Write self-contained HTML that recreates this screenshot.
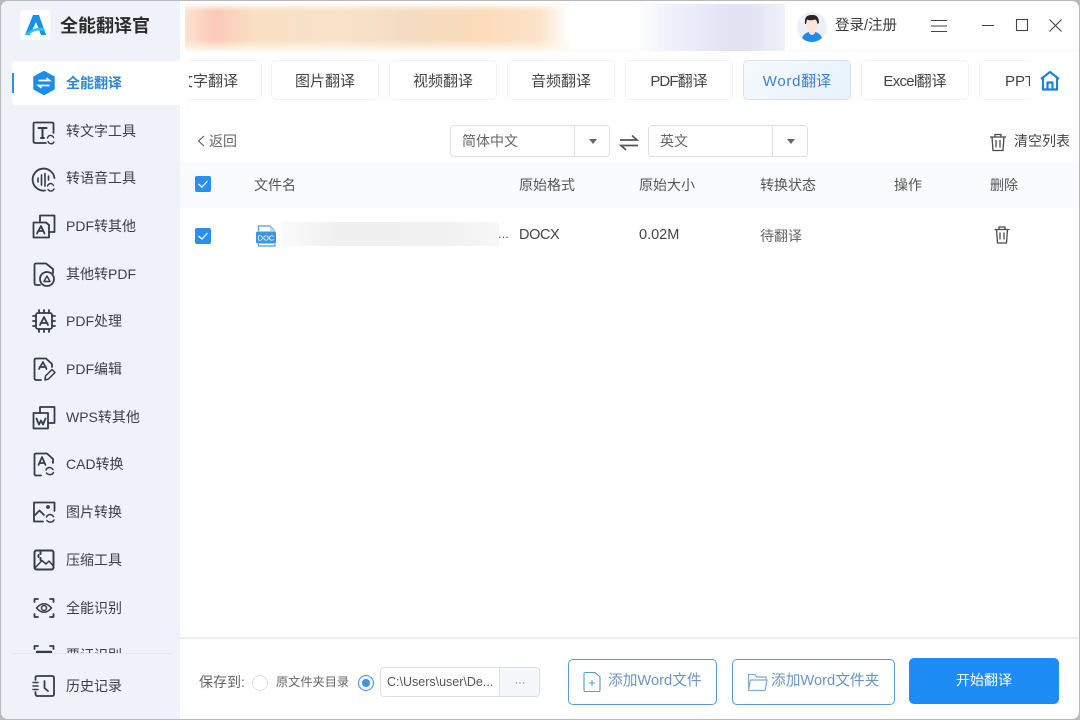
<!DOCTYPE html>
<html lang="zh"><head><meta charset="utf-8"><title>全能翻译官</title>
<style>
*{box-sizing:border-box;margin:0;padding:0}
html,body{width:1080px;height:720px;overflow:hidden;background:#b9b9b9}
body{font-family:"Liberation Sans","Noto Sans CJK SC",sans-serif;color:#333;font-size:14px}
.abs,.t,.tab,.ic{position:absolute}
.t{white-space:nowrap;line-height:20px}
#win{position:absolute;left:1px;top:1px;width:1078px;height:718px;background:#fff;border-radius:7px;overflow:hidden}
#page{position:absolute;left:-1px;top:-1px;width:1080px;height:720px}
#side{position:absolute;left:0;top:0;width:180px;height:720px;background:#eff3f9}
.nav{position:absolute;left:66px;font-size:14px;color:#3a3f47;line-height:20px;white-space:nowrap}
.ic{left:31px;width:26px;height:26px;fill:none;stroke:#333c48;stroke-width:1.8;stroke-linecap:round;stroke-linejoin:round}
.tab{top:60px;width:108px;height:40px;background:#fff;border:1px solid #f0f2f5;border-radius:5px;text-align:center;line-height:41px;font-size:15px;color:#444;white-space:nowrap;overflow:hidden}
.sel{position:absolute;top:125px;height:32px;background:#fff;border:1px solid #dcdfe6;border-radius:4px}
.sel i{position:absolute;right:34px;top:0;bottom:0;width:1px;background:#dcdfe6}
.sel b{position:absolute;right:12px;top:13px;width:0;height:0;border-left:4.5px solid transparent;border-right:4.5px solid transparent;border-top:5px solid #666}
.sel span{position:absolute;left:11px;top:5px;font-size:14px;color:#666;line-height:20px}
.cb{position:absolute;left:195px;width:16px;height:16px;background:#2a8ff0;border-radius:2px}
.cb svg{position:absolute;left:0;top:0;width:16px;height:16px;fill:none;stroke:#fff;stroke-width:1.2}
.h{top:175px;font-size:14px;color:#555}
.btn{position:absolute;top:659px;height:46px;background:#fff;border:1px solid #5b9ccb;border-radius:5px;font-size:14.7px;color:#6a95c4;line-height:43px;white-space:nowrap}
</style></head><body>
<div id="win"><div id="page">

<div class="abs" style="left:180px;top:50px;width:900px;height:1px;background:#f6f7f8"></div>

<!-- blurred banner -->
<div class="abs" style="left:185px;top:4px;width:600px;height:47px;overflow:hidden">
<div class="abs" style="left:0;top:0;width:385px;height:47px;background:linear-gradient(90deg,#fbe3d2 0,#fdd2c0 5%,#fbc9b8 8%,#f9e0c4 18%,#f8e3c9 40%,#f4dcc2 58%,#fcdcba 78%,#fbe3ca 92%,#fff 100%)"></div>
<div class="abs" style="left:0;top:0;width:385px;height:7px;background:linear-gradient(#fffaf5,rgba(255,255,255,0))"></div>
<div class="abs" style="left:0;top:36px;width:385px;height:11px;background:linear-gradient(rgba(255,255,255,0),#fff8ee)"></div>
<div class="abs" style="left:450px;top:0;width:150px;height:47px;background:linear-gradient(90deg,#fff 0,#eff0fb 25%,#e3e3f5 60%,#e2e2f1 75%,#eef1fa 100%)"></div>
</div>

<!-- sidebar -->
<div id="side"></div>
<div class="abs" style="left:12px;top:61px;width:180px;height:44px;background:#fff;border-radius:4px 0 0 4px"></div>
<div class="abs" style="left:180px;top:56px;width:12px;height:50px;background:#fff"></div>
<div class="abs" style="left:12px;top:73px;width:2px;height:20px;background:#2a8ff0"></div>

<!-- logo -->
<div class="abs" style="left:20px;top:10px;width:30px;height:30px;background:#fff;border-radius:3px"></div>
<svg class="abs" style="left:20px;top:10px" width="30" height="30" viewBox="0 0 30 30"><path d="M5 25 L13 5 H19 L26 25 H21 L16 12 L10 25Z" fill="#1492ea"/><path d="M5 25 C10 19 17 17 24 18 L25 21 C18 20 12 21 9 25Z" fill="#32c4f2"/></svg>
<div class="t" style="left:60px;top:14px;font-size:18px;font-weight:700;color:#2b2b2b;line-height:24px">全能翻译官</div>

<!-- nav icons -->
<svg class="abs" style="left:31px;top:70px" width="26" height="26" viewBox="0 0 26 26"><path d="M13 1.5 L23 7 V19 L13 24.5 L3 19 V7Z" fill="#1b8cec" stroke="#1b8cec" stroke-width="1.5" stroke-linejoin="round"/><path d="M7.5 10.5 H18.5 L15.5 8 M18.5 15.5 H7.5 L10.5 18" fill="none" stroke="#fff" stroke-width="1.7"/></svg>
<div class="nav" style="top:73px;color:#2f86d8;font-weight:700;font-size:14px">全能翻译</div>

<svg class="ic" style="top:120px" viewBox="0 0 26 26"><path d="M15 23 H4 Q2.500 23 2.500 21 V4 Q2.500 2.500 4 2.500 H21 Q22.500 2.500 22.500 4 V13"/><path d="M7.500 8 H15.500 M11.500 8 V18 M10 18 H13" stroke-width="2"/><path d="M16.500 18 Q17.500 15 20 15.500 Q22 16 22.500 17.500 M23 22 Q21.500 24.500 19 23.500 Q17.500 23 17 21.500" stroke-width="1.400"/></svg>
<div class="nav" style="top:121px">转文字工具</div>

<svg class="ic" style="top:167px" viewBox="0 0 26 26"><path d="M14 23.500 A11 11 0 1 1 23.500 11"/><path d="M7 11 V15 M10.500 8 V18 M14 6.500 V19 M17.500 9 V13" stroke-width="1.600"/><path d="M16.500 19 Q17.500 16.500 20 16.500 Q22 17 22.500 18.500 M23 22 Q21.500 24.500 19 24 Q17.500 23.500 17 22.500" stroke-width="1.400"/></svg>
<div class="nav" style="top:168px">转语音工具</div>

<svg class="ic" style="top:213px" viewBox="0 0 26 26"><path d="M9 8 V2.500 H23.500 V19 H18"/><path d="M2.500 9.500 H15 L18 12 V24.500 H2.500Z"/><path d="M6 20.500 L10 13 L13.500 20.500 M7 18 H12.500" stroke-width="1.800"/></svg>
<div class="nav" style="top:216px">PDF转其他</div>

<svg class="ic" style="top:261px" viewBox="0 0 26 26"><path d="M9 24 H5 Q3.500 24 3.500 22 V4 Q3.500 2.500 5 2.500 H15 L22 8 V12"/><circle cx="16" cy="18" r="7"/><path d="M13 20.500 L16 15 L19 20.500Z" stroke-width="1.400"/></svg>
<div class="nav" style="top:264px">其他转PDF</div>

<svg class="ic" style="top:308px" viewBox="0 0 26 26"><rect x="5" y="5" width="16" height="16" rx="2"/><path d="M8 5 V2 M13 5 V2 M18 5 V2 M8 24 V21 M13 24 V21 M18 24 V21 M2 8 H5 M2 13 H5 M2 18 H5 M21 8 H24 M21 13 H24 M21 18 H24"/><path d="M9 17 L13 9 L17 17 M9.500 15 H16.500" stroke-width="1.800"/></svg>
<div class="nav" style="top:311px">PDF处理</div>

<svg class="ic" style="top:356px" viewBox="0 0 26 26"><path d="M10 24 H5 Q3.500 24 3.500 22 V4 Q3.500 2.500 5 2.500 H15 L21 8 V11"/><path d="M8 13 L12 6 L15.500 13 M8.500 11 H15" stroke-width="1.700"/><path d="M14 24 L14.500 20 L21 13.500 L24 16.500 L17.500 23Z" stroke-width="1.500"/></svg>
<div class="nav" style="top:359px">PDF编辑</div>

<svg class="ic" style="top:404px" viewBox="0 0 26 26"><path d="M9 8 V3 H23.500 V19 H18"/><path d="M2.500 9 H17 V24.500 H2.500Z"/><path d="M5.500 14.500 L8 20.500 L10 16.500 L12 20.500 L14.500 14.500" stroke-width="1.800"/></svg>
<div class="nav" style="top:407px">WPS转其他</div>

<svg class="ic" style="top:451px" viewBox="0 0 26 26"><path d="M10 24.500 H5 Q3.500 24.500 3.500 23 V4 Q3.500 2.500 5 2.500 H16 L22 8 V12"/><path d="M7.500 14 L11 6 L14.500 14 M8.500 12 H13.500" stroke-width="1.700"/><path d="M15 19 Q16 16.500 19 16.500 Q21 17 22 18.500 M22.500 21.500 Q21 24 18.500 23.500 Q16.500 23.500 15.500 22" stroke-width="1.500"/></svg>
<div class="nav" style="top:454px">CAD转换</div>

<svg class="ic" style="top:499px" viewBox="0 0 26 26"><path d="M12 22.500 H3 V3.500 H23.500 V12"/><path d="M3 17 L8.500 11.500 L13 16"/><circle cx="17" cy="8" r="1" fill="#333c48"/><path d="M15.500 18 Q16.500 15.500 19.500 15.500 Q21.500 16 22.500 17.500 M23 21 Q21.500 23.500 19 23 Q17 23 16 21.500" stroke-width="1.500"/></svg>
<div class="nav" style="top:502px">图片转换</div>

<svg class="ic" style="top:547px" viewBox="0 0 26 26"><rect x="3.500" y="3.500" width="19" height="19" rx="2" stroke-width="2"/><path d="M4 21 L11 13.500 L15 17 L18 14 L22 18.500" stroke-width="1.500"/><path d="M9.500 5 V7 M7.500 8 V10 M9.500 11 V13" stroke-width="2"/></svg>
<div class="nav" style="top:550px">压缩工具</div>

<svg class="ic" style="top:595px" viewBox="0 0 26 26"><path d="M3.500 7 V4 H7 M19 4 H22.500 V7 M3.500 19 V22 H7 M19 22 H22.500 V19" stroke-width="1.800"/><path d="M5.500 13 Q13 4.500 20.500 13 Q13 21.500 5.500 13Z" stroke-width="1.500"/><circle cx="13" cy="13" r="2.500" stroke-width="1.500"/></svg>
<div class="nav" style="top:598px">全能识别</div>

<svg class="ic" style="top:642px" viewBox="0 0 26 26"><path d="M3.500 7 V4 H7 M19 4 H22.500 V7" stroke-width="1.800"/><path d="M6 10 H20" stroke-width="2.500"/></svg>
<div class="nav" style="top:645px">票证识别</div>

<div class="abs" style="left:0;top:654px;width:180px;height:66px;background:#eff3f9"></div>
<div class="abs" style="left:12px;top:653px;width:160px;height:1px;background:#e4e7ec"></div>

<svg class="ic" style="top:673px" viewBox="0 0 26 26"><path d="M4.500 7 V4.500 Q4.500 3 6.500 3 H21 Q23 3 23 5 V21 Q23 23 21 23 H6.500 Q4.500 23 4.500 21 V19"/><path d="M2 9.500 H7 M2 13 H7 M2 16.500 H7" stroke-width="1.500"/><path d="M13.500 8 V15 L17 18" stroke-width="1.800"/></svg>
<div class="nav" style="top:676px">历史记录</div>

<!-- title bar -->
<svg class="abs" style="left:796px;top:11px" width="32" height="32" viewBox="0 0 32 32"><circle cx="16" cy="16" r="15" fill="#edf0f7"/><path d="M6 27 Q8 22 13 21 H19 Q24 22 26 27 Q21 31 16 31 Q10 31 6 27Z" fill="#1d8ce8"/><path d="M13 18 H19 V22 Q16 26 13 22Z" fill="#fde1cf"/><ellipse cx="16" cy="13" rx="6" ry="7.500" fill="#fde4d4"/><path d="M9 13 Q8 4 15 4 Q23 3 23 12 L21.500 13 Q21 9 19 8.500 Q14 10 11 8.500 Q10.500 11 10 13Z" fill="#26262e"/></svg>
<div class="t" style="left:835px;top:16px;font-size:14.5px;color:#3a3a3a">登录/注册</div>
<svg class="abs" style="left:930px;top:18px" width="18" height="16" fill="none" stroke="#444" stroke-width="1.100"><path d="M1 2.500 H17 M1 8 H17 M1 13.500 H17"/></svg>
<svg class="abs" style="left:980px;top:16px" width="90" height="20" fill="none" stroke="#444" stroke-width="1.100"><path d="M2 9.500 H14"/><rect x="36.500" y="3.500" width="11" height="11"/><path d="M69.500 3.500 L81.500 15.500 M81.500 3.500 L69.500 15.500"/></svg>

<!-- tabs -->
<div class="tab" style="left:154px;width:108px;clip-path:inset(-1px -1px -1px 35px)">文字翻译</div>
<div class="tab" style="left:271px">图片翻译</div>
<div class="tab" style="left:389px">视频翻译</div>
<div class="tab" style="left:507px">音频翻译</div>
<div class="tab" style="left:625px"><span style="letter-spacing:-.9px">PDF</span>翻译</div>
<div class="tab" style="left:743px;background:linear-gradient(135deg,#f6fafe,#e6f2fc);border-color:#d3e5f4;color:#3c82c8"><span style="letter-spacing:.7px">Word</span>翻译</div>
<div class="tab" style="left:861px"><span style="letter-spacing:-.7px">Excel</span>翻译</div>
<div class="tab" style="left:979px;width:120px;text-align:left;padding-left:25px">PPT翻译</div>
<div class="abs" style="left:1030px;top:56px;width:50px;height:50px;background:#fff"></div>
<svg class="abs" style="left:1039px;top:70px" width="22" height="22" viewBox="0 0 22 22" fill="none" stroke="#1b83d6" stroke-width="2.200" stroke-linejoin="round"><path d="M2 9 L11 2 L20 9 M4 7.500 V19.500 H18 V7.500"/><path d="M8.500 19 V12.500 H13.500 V19"/></svg>

<!-- toolbar -->
<svg class="abs" style="left:196px;top:134px" width="12" height="14" fill="none" stroke="#555" stroke-width="1.100"><path d="M8 2 L2.500 7 L8 12"/></svg>
<div class="t" style="left:209px;top:131px;font-size:14px;color:#666">返回</div>

<div class="sel" style="left:450px;width:160px"><span>简体中文</span><i></i><b></b></div>
<svg class="abs" style="left:618px;top:133px" width="22" height="20" fill="none" stroke="#555" stroke-width="1.700"><path d="M2 7 H19 L14 2.500 M20 12.500 H3 L8 17"/></svg>
<div class="sel" style="left:648px;width:160px"><span>英文</span><i></i><b></b></div>

<svg class="abs" style="left:988px;top:132px" width="20" height="20" viewBox="0 0 20 20" fill="none" stroke="#4a4a4a" stroke-width="1.300"><path d="M2 5 H18 M7 5 V2.500 H13 V5 M4 5 L5 18.500 H15 L16 5 M8 8 V15.500 M12 8 V15.500"/></svg>
<div class="t" style="left:1014px;top:131px;font-size:14px;color:#444">清空列表</div>

<!-- table -->
<div class="abs" style="left:180px;top:162px;width:900px;height:46px;background:#fafbfc"></div>
<div class="cb" style="top:176px"><svg viewBox="0 0 16 16"><path d="M3.500 8 L7 11 L12.500 5"/></svg></div>
<div class="t h" style="left:254px">文件名</div>
<div class="t h" style="left:519px">原始格式</div>
<div class="t h" style="left:639px">原始大小</div>
<div class="t h" style="left:760px">转换状态</div>
<div class="t h" style="left:894px">操作</div>
<div class="t h" style="left:990px">删除</div>

<div class="cb" style="top:228px"><svg viewBox="0 0 16 16"><path d="M3.500 8 L7 11 L12.500 5"/></svg></div>
<svg class="abs" style="left:255px;top:224px" width="24" height="24" viewBox="0 0 24 24"><path d="M3.500 7 V2 H15 L20 7" fill="none" stroke="#4e99d9" stroke-width="1.200"/><path d="M15 2 V7 H20Z" fill="#b9d8f0"/><rect x="1" y="7.500" width="20" height="12" rx="1.500" fill="#3f96e0"/><path d="M3.500 20 V22 H20 V20" fill="none" stroke="#4e99d9" stroke-width="1.200"/><text x="11" y="16.500" text-anchor="middle" font-family="Liberation Sans" font-size="7.500" fill="#fff">DOC</text></svg>
<div class="abs" style="left:282px;top:222px;width:217px;height:24px;background:linear-gradient(90deg,#fbfbfb,#f0f0f0 25%,#f1f1f1 75%,#f7f7f7)"></div>
<div class="t" style="left:498px;top:224px;font-size:13px;color:#555">...</div>
<div class="t" style="left:519px;top:225px;font-size:14.500px;letter-spacing:-.4px;color:#444">DOCX</div>
<div class="t" style="left:639px;top:225px;font-size:14.500px;color:#444">0.02M</div>
<div class="t" style="left:760px;top:226px;font-size:14px;color:#666">待翻译</div>
<svg class="abs" style="left:992px;top:225px" width="20" height="20" viewBox="0 0 20 20" fill="none" stroke="#4a4a4a" stroke-width="1.300"><path d="M2.500 4.500 H17.500 M7 4.500 V2 H13 V4.500 M4.500 4.500 L5.500 18 H14.500 L15.500 4.500 M8 7.500 V14.500 M12 7.500 V14.500"/></svg>

<!-- footer -->
<div class="abs" style="left:180px;top:637px;width:900px;height:2px;background:#eeeff1"></div>
<div class="t" style="left:199px;top:672px;font-size:14px;color:#666">保存到:</div>
<div class="abs" style="left:252px;top:675px;width:16px;height:16px;border:1px solid #dcdfe6;border-radius:50%;background:#fff"></div>
<div class="t" style="left:276px;top:672px;font-size:12.200px;color:#666">原文件夹目录</div>
<div class="abs" style="left:358px;top:675px;width:16px;height:16px;border:1px solid #3f92de;border-radius:50%;background:#eef5fc"></div>
<div class="abs" style="left:362px;top:679px;width:8px;height:8px;border-radius:50%;background:#3f92de"></div>
<div class="abs" style="left:380px;top:667px;width:160px;height:30px;border:1px solid #dcdfe6;border-radius:4px;background:#fff;overflow:hidden">
  <div class="abs" style="left:118px;top:0;width:41px;height:30px;background:#f5f7fa;border-left:1px solid #dcdfe6;text-align:center;color:#777;font-size:11px;line-height:31px">···</div>
  <div class="t" style="left:6px;top:4px;font-size:12.500px;color:#555">C:\Users\user\De...</div>
</div>

<div class="btn" style="left:568px;width:149px;padding-left:39px">添加Word文件</div>
<svg class="abs" style="left:583px;top:671px" width="18" height="22" viewBox="0 0 18 22" fill="none" stroke="#5b9ccb" stroke-width="1.100"><path d="M1 3 Q1 1.500 2.500 1.500 H12 L17 6 V19 Q17 20.500 15.500 20.500 H2.500 Q1 20.500 1 19Z M6 12 H12 M9 9 V15"/></svg>
<div class="btn" style="left:732px;width:163px;padding-left:38px">添加Word文件夹</div>
<svg class="abs" style="left:747px;top:672px" width="21" height="20" viewBox="0 0 21 20" fill="none" stroke="#7eacd2" stroke-width="1.200"><path d="M1.500 17 V2.500 H8 L10 5 H19 V8 M1.500 18.500 L3.500 8 H20 L18 18.500Z"/></svg>
<div class="abs" style="left:909px;top:658px;width:150px;height:46px;background:#1e8cf5;border-radius:5px;color:#fff;text-align:center;line-height:45px;font-size:14px">开始翻译</div>

</div></div>
</body></html>
